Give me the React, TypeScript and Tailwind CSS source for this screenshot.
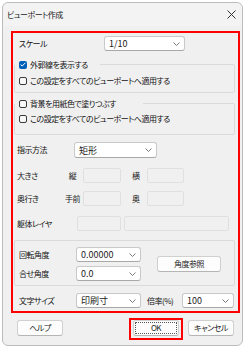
import React from "react";

const Chevron = () => (
	<svg width="7" height="4" viewBox="0 0 7 4" className="shrink-0">
		<path d="M0.5 0.5 L3.5 3.5 L6.5 0.5" fill="none" stroke="#6b6b6b" strokeWidth="0.9" />
	</svg>
);

const Select = ({ value, className }: { value: string; className: string }) => (
	<div
		className={`flex items-center justify-between h-[15px] pl-[4px] pr-[4px] bg-white border border-[#c9c9c9] border-b-[#a8a8a8] rounded-[3px] text-[#1a1a1a] ${className}`}
	>
		<span className="text-[9px] tracking-normal">{value}</span>
		<Chevron />
	</div>
);

const Box = ({ className }: { className: string }) => (
	<div className={`h-[15px] border border-[#e0e0e0] rounded-[2px] bg-[#f0f0f0] ${className}`} />
);

const Check = ({ checked, label }: { checked?: boolean; label: string }) => (
	<div className="flex items-center gap-[3px] h-[11px]">
		{checked ? (
			<div className="w-[8px] h-[8px] rounded-[2px] bg-[#005fb8] flex items-center justify-center">
				<svg width="6" height="5" viewBox="0 0 6 5">
					<path d="M0.6 2.6 L2.2 4 L5.4 0.8" fill="none" stroke="white" strokeWidth="1" />
				</svg>
			</div>
		) : (
			<div className="w-[8px] h-[8px] rounded-[2px] border border-[#3a3a3a] bg-[#f7f7f7]" />
		)}
		<span className="text-[#111]">{label}</span>
	</div>
);

const Button = ({ label, className }: { label: string; className: string }) => (
	<div
		className={`h-[16px] flex items-center justify-center bg-[#fdfdfd] border border-[#d0d0d0] border-b-[#b5b5b5] rounded-[3px] text-[#1a1a1a] ${className}`}
	>
		{label}
	</div>
);

export default function App() {
	return (
		<div className="w-[245px] h-[348px] bg-white pt-[2px] pl-[2px] font-['Noto_Sans_CJK_JP',sans-serif] text-[8px] leading-none tracking-[-0.5px] [font-feature-settings:'palt'] text-[#111]">
			<div className="w-[241px] h-[344px] border border-[#bcbcbc] rounded-[6px] bg-[#f0f0f0] flex flex-col">
				{/* title bar */}
				<div className="h-[23px] flex items-center justify-between pl-[4px] pr-[6px] bg-[#f3f3f3] rounded-t-[6px]">
					<span className="text-[#1a1a1a]">ビューポート作成</span>
					<svg width="9" height="9" viewBox="0 0 9 9">
						<path d="M0.5 0.5 L8.5 8.5 M8.5 0.5 L0.5 8.5" stroke="#333" strokeWidth="1" />
					</svg>
				</div>

				{/* main panel */}
				<div className="ml-[8px] mt-[5px] w-[229px] h-[282px] border-2 border-[#ff0000] flex flex-col">
					<div className="mt-[3px] flex items-center h-[15px]">
						<span className="w-[91px] pl-[6px]">スケール</span>
						<Select value="1/10" className="w-[81px]" />
					</div>

					<fieldset className="mt-[8px] ml-[1px] w-[221px] border border-[#dadada] rounded-[2px] pb-[6px]">
						<legend className="w-[85px] pl-[4px]">
							<Check checked label="外郭線を表示する" />
						</legend>
						<div className="mt-[5px] pl-[4px]">
							<Check label="この設定をすべてのビューポートへ適用する" />
						</div>
					</fieldset>

					<fieldset className="mt-[5px] ml-[1px] w-[221px] border border-[#dadada] rounded-[2px] pb-[10px]">
						<legend className="w-[128px] pl-[4px]">
							<Check label="背景を用紙色で塗りつぶす" />
						</legend>
						<div className="mt-[4px] pl-[4px]">
							<Check label="この設定をすべてのビューポートへ適用する" />
						</div>
					</fieldset>

					<div className="mt-[7px] flex items-center h-[16px]">
						<span className="w-[61px] pl-[4px]">指示方法</span>
						<Select value="矩形" className="w-[83px] h-[16px]" />
					</div>

					<div className="mt-[10px] flex items-center text-[#222]">
						<span className="w-[49px] pl-[4px]">大きさ</span>
						<span className="w-[21px] text-center">縦</span>
						<Box className="w-[38px]" />
						<span className="w-[26px] pl-[11px]">横</span>
						<Box className="w-[37px]" />
					</div>

					<div className="mt-[8px] flex items-center text-[#222]">
						<span className="w-[49px] pl-[4px]">奥行き</span>
						<span className="w-[21px] text-center">手前</span>
						<Box className="w-[38px]" />
						<span className="w-[26px] pl-[11px]">奥</span>
						<Box className="w-[37px]" />
					</div>

					<div className="mt-[10px] flex items-center text-[#222]">
						<span className="w-[64px] pl-[4px]">躯体レイヤ</span>
						<Box className="w-[44px]" />
						<Box className="w-[105px] ml-[3px]" />
					</div>

					<fieldset className="mt-[9px] ml-[1px] w-[221px] border border-[#dadada] rounded-[2px] pt-[6px] pb-[4px] flex items-center">
						<div className="flex flex-col gap-[4px]">
							<div className="flex items-center">
								<span className="w-[61px] pl-[4px]">回転角度</span>
								<Select value="0.00000" className="w-[65px]" />
							</div>
							<div className="flex items-center">
								<span className="w-[61px] pl-[4px]">合せ角度</span>
								<Select value="0.0" className="w-[65px]" />
							</div>
						</div>
						<Button label="角度参照" className="ml-[16px] w-[64px] h-[15px]" />
					</fieldset>

					<div className="mt-[7px] flex items-center">
						<span className="w-[63px] pl-[6px]">文字サイズ</span>
						<Select value="印刷寸" className="w-[65px]" />
						<span className="w-[41px] pl-[6px]">倍率(%)</span>
						<Select value="100" className="w-[52px]" />
					</div>
				</div>

				{/* footer buttons */}
				<div className="mt-[7px] flex items-center">
					<Button label="ヘルプ" className="ml-[14px] w-[46px]" />
					<div className="relative ml-[70px] w-[46px] h-[16px]">
						<Button label="OK" className="w-[46px] border-[#8a8a8a]" />
						<div className="absolute inset-[2px] border border-dotted border-[#555] rounded-[1px]" />
						<div className="absolute -left-[4px] -right-[4px] -top-[2px] -bottom-[4px] border-2 border-[#ff0000]" />
					</div>
					<Button label="キャンセル" className="ml-[9px] w-[46px]" />
				</div>
			</div>
		</div>
	);
}
